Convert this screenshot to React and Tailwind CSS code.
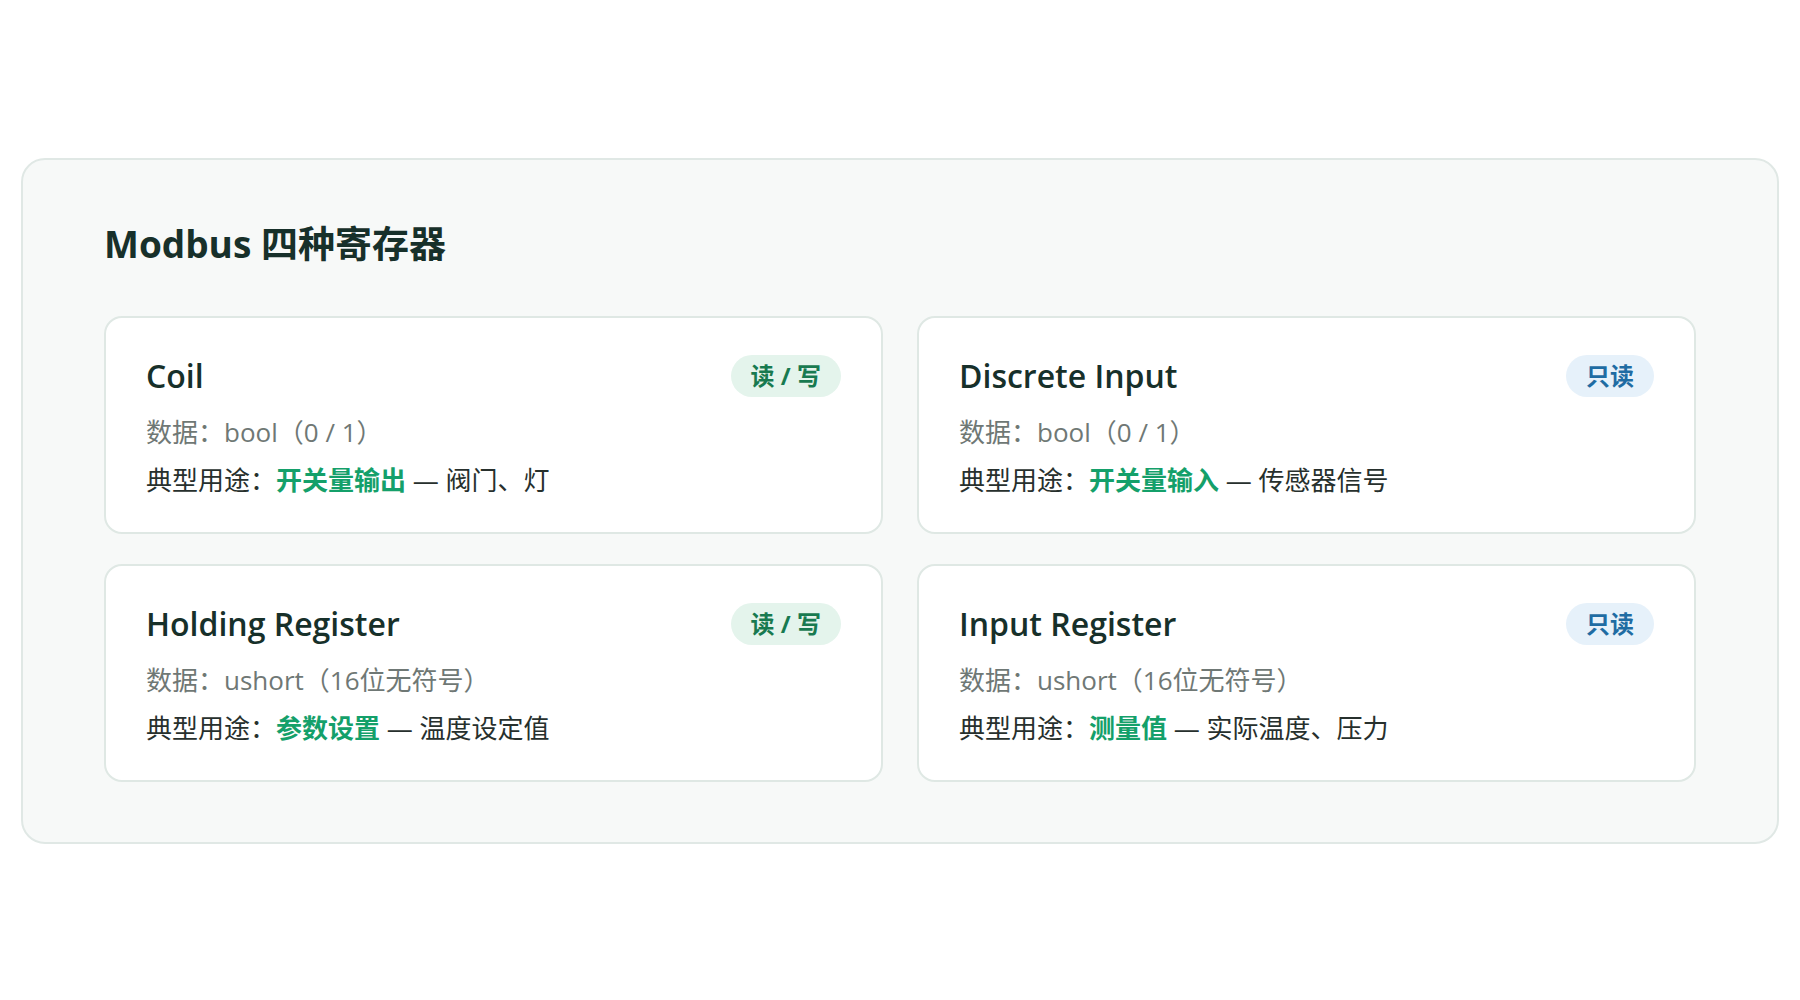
const font = { fontFamily: '"Open Sans", "Noto Sans CJK SC", sans-serif' };

function Card({ title, badge, rw, data, green, rest }) {
  return (
    <div className="bg-white border-2 border-[#dfe8e4] rounded-[18px] pl-[40px] pr-[40px] pt-[38px] pb-[36px]">
      <div className="flex items-center justify-between h-[40px] mb-[20px]">
        <div className="text-[32px] font-semibold text-[#17302a] leading-[40px]">{title}</div>
        {rw ? (
          <div className="h-[42px] px-[20px] rounded-full bg-[#e4f4ec] text-[#187a50] text-[24px] font-bold flex items-center">{badge}</div>
        ) : (
          <div className="h-[42px] px-[20px] rounded-full bg-[#e6f1fa] text-[#1f6ca3] text-[24px] font-bold flex items-center">{badge}</div>
        )}
      </div>
      <div className="text-[26px] leading-[32px] text-[#6f7875] mb-[16px]">数据：{data}</div>
      <div className="text-[26px] leading-[32px] text-[#27302d]">
        典型用途：<span className="text-[#14a06a] font-bold">{green}</span> — {rest}
      </div>
    </div>
  );
}

export default function App() {
  return (
    <div className="w-[1800px] h-[1000px] bg-white pt-[158px] px-[21px]" style={font}>
      <div className="bg-[#f7f9f8] border-2 border-[#e0e8e5] rounded-[24px] pt-[60px] pb-[60px] px-[81px]">
        <h1 className="text-[37px] leading-[48px] font-bold text-[#17302a] mb-[48px]">Modbus 四种寄存器</h1>
        <div className="grid grid-cols-2 gap-x-[34px] gap-y-[30px]">
          <Card title="Coil" badge="读 / 写" rw data="bool（0 / 1）" green="开关量输出" rest="阀门、灯" />
          <Card title="Discrete Input" badge="只读" data="bool（0 / 1）" green="开关量输入" rest="传感器信号" />
          <Card title="Holding Register" badge="读 / 写" rw data="ushort（16位无符号）" green="参数设置" rest="温度设定值" />
          <Card title="Input Register" badge="只读" data="ushort（16位无符号）" green="测量值" rest="实际温度、压力" />
        </div>
      </div>
    </div>
  );
}
